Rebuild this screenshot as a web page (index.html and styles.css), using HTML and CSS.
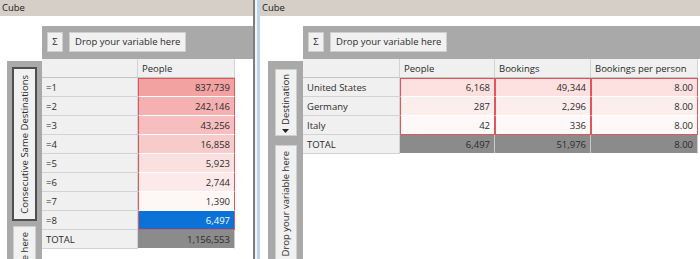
FILE: index.html
```html
<!DOCTYPE html>
<html lang="en">
<head>
  <meta charset="UTF-8" />
  <title>Cube</title>
  <link rel="stylesheet" href="styles.css">
</head>
<body>
  <div class="app">
    <!-- Cube 1: destinations -->
    <section class="panel panel-left">
      <div class="title">Cube</div>
      <div class="pivot">
        <div class="corner"></div>
        <div class="col-zone">
          <div class="btn btn-sigma">Σ</div>
          <div class="btn">Drop your variable here</div>
        </div>
        <div class="row-zone">
          <div class="vbtn vbtn-active vbtn-long"><span>Consecutive Same Destinations</span></div>
          <div class="vbtn vbtn-drop"><span>Drop your variable here</span></div>
        </div>
        <table class="grid">
          <colgroup><col class="w96"><col class="w97"></colgroup>
          <tr><td class="hd"></td><td class="hd">People</td></tr>
          <tr><td class="hd">=1</td><td class="num c top h1">837,739</td></tr>
          <tr><td class="hd">=2</td><td class="num c h2">242,146</td></tr>
          <tr><td class="hd">=3</td><td class="num c h3">43,256</td></tr>
          <tr><td class="hd">=4</td><td class="num c h4">16,858</td></tr>
          <tr><td class="hd">=5</td><td class="num c h5">5,923</td></tr>
          <tr><td class="hd">=6</td><td class="num c h6">2,744</td></tr>
          <tr><td class="hd">=7</td><td class="num c h7">1,390</td></tr>
          <tr><td class="hd">=8</td><td class="num c bottom sel">6,497</td></tr>
          <tr><td class="hd">TOTAL</td><td class="num tot">1,156,553</td></tr>
        </table>
      </div>
    </section>

    <div class="divider"></div>

    <!-- Cube 2: bookings by country -->
    <section class="panel panel-right">
      <div class="title">Cube</div>
      <div class="pivot">
        <div class="corner"></div>
        <div class="col-zone">
          <div class="btn btn-sigma">Σ</div>
          <div class="btn">Drop your variable here</div>
        </div>
        <div class="row-zone">
          <div class="vbtn vbtn-short">
            <span>Destination</span>
            <svg class="sort" width="7" height="4" viewBox="0 0 7 4"><path d="M0 0h7L3.5 4z" fill="#222"/></svg>
          </div>
          <div class="vbtn vbtn-drop"><span>Drop your variable here</span></div>
        </div>
        <table class="grid">
          <colgroup><col class="w97"><col class="w95"><col class="w96"><col class="w107"></colgroup>
          <tr><td class="hd"></td><td class="hd">People</td><td class="hd">Bookings</td><td class="hd">Bookings per person</td></tr>
          <tr><td class="hd">United States</td><td class="num c top r1">6,168</td><td class="num c top r1">49,344</td><td class="num c top r1">8.00</td></tr>
          <tr><td class="hd">Germany</td><td class="num c r2">287</td><td class="num c r2">2,296</td><td class="num c r2">8.00</td></tr>
          <tr><td class="hd">Italy</td><td class="num c bottom r3">42</td><td class="num c bottom r3">336</td><td class="num c bottom r3">8.00</td></tr>
          <tr><td class="hd">TOTAL</td><td class="num tot">6,497</td><td class="num tot">51,976</td><td class="num tot">8.00</td></tr>
        </table>
      </div>
    </section>
  </div>
</body>
</html>
```

FILE: styles.css
```css
* {
  box-sizing: border-box;
}
body {
  margin: 0;
  font-family: 'Open Sans', 'Noto Sans', sans-serif;
  font-size: 9.5px;
  color: #2b2b2b;
  background: #fff;
  overflow: hidden;
}
.app {
  display: flex;
  width: 700px;
  height: 259px;
  overflow: hidden;
}

/* Panels */
.panel {
  display: flex;
  flex-direction: column;
  height: 259px;
  overflow: hidden;
}
.panel-left {
  width: 253px;
}
.panel-right {
  flex: 1;
}
.title {
  height: 16px;
  line-height: 16px;
  padding-left: 2px;
  background: #d5cfc7;
  color: #1a1a1a;
}
.divider {
  width: 7px;
  border-left: 2px solid #7d7d7d;
  border-right: 3px solid #bed5ef;
  background: #f6f6f6;
}

/* Pivot layout */
.pivot {
  flex: 1;
  display: grid;
  grid-template-columns: 35px 1fr;
  grid-template-rows: 33px 1fr;
  margin-top: 10px;
  padding-left: 7px;
}
.panel-right .pivot {
  padding-left: 8px;
}
.col-zone {
  background: #a9a9a9;
  display: flex;
  align-items: flex-start;
  gap: 6px;
  padding: 6px 0 0 5px;
}
.row-zone {
  background: #a9a9a9;
  margin-top: 2px;
  display: flex;
  flex-direction: column;
  align-items: center;
  gap: 5px;
  padding-top: 6px;
  overflow: hidden;
}
.btn {
  height: 20px;
  line-height: 18px;
  padding: 0 5px;
  background: #f1f1f1;
  border: 1px solid #cfcfcf;
  white-space: nowrap;
}
.btn-sigma {
  width: 16px;
  padding: 0;
  text-align: center;
}
.vbtn {
  flex-shrink: 0;
  width: 24px;
  background: #f1f1f1;
  border: 1px solid #cfcfcf;
  display: flex;
  flex-direction: column;
  align-items: center;
  justify-content: center;
}
.vbtn span {
  writing-mode: vertical-rl;
  transform: rotate(180deg);
  white-space: nowrap;
}
.vbtn-active {
  width: 25px;
  border: 2px solid #4f4f4f;
}
.vbtn-long {
  height: 154px;
}
.vbtn-short {
  width: 22px;
  height: 67px;
  margin-top: 2px;
  padding-top: 2px;
}
.vbtn-short .sort {
  margin-top: 4px;
}
.vbtn-drop {
  width: 23px;
  height: 118px;
}
.panel-right .vbtn-drop {
  width: 22px;
  margin-top: 4px;
}

/* Table */
.grid {
  border-collapse: separate;
  border-spacing: 0;
  table-layout: fixed;
  align-self: start;
  justify-self: start;
}
.w95 { width: 95px; }
.w96 { width: 96px; }
.w97 { width: 97px; }
.w107 { width: 107px; }
.grid tr {
  height: 19px;
}
.grid td {
  padding: 0 4px;
  white-space: nowrap;
  overflow: hidden;
  border-bottom: 1px solid #fff;
}
.grid .hd {
  background: #f0f0f0;
  border-right: 1px solid #d3d3d3;
  border-bottom: 1px solid #d3d3d3;
}
.grid tr:first-child .hd {
  border-bottom-color: #c4c4c4;
}
.num {
  text-align: right;
}
.c {
  border-left: 1px solid #e0575b;
  border-right: 1px solid #e0575b;
}
.top {
  border-top: 1px solid #e0575b;
}
.grid .bottom {
  border-bottom: 1px solid #e0575b;
}
.h1 { background: #f3a2a2; }
.h2 { background: #f5b1b1; }
.h3 { background: #f6bebe; }
.h4 { background: #f8cbcb; }
.h5 { background: #fbe0e0; }
.h6 { background: #fce9e9; }
.h7 { background: #fdf8f6; }
.sel {
  background: #0b73d8;
  color: #fff;
}
.r1 { background: #fde1e1; }
.r2 { background: #fdeeee; }
.r3 { background: #fef8f8; }
.tot {
  background: #8b8b8b;
  color: #2a2a2a;
  border-right: 1px solid #c9c9c9;
}
```
